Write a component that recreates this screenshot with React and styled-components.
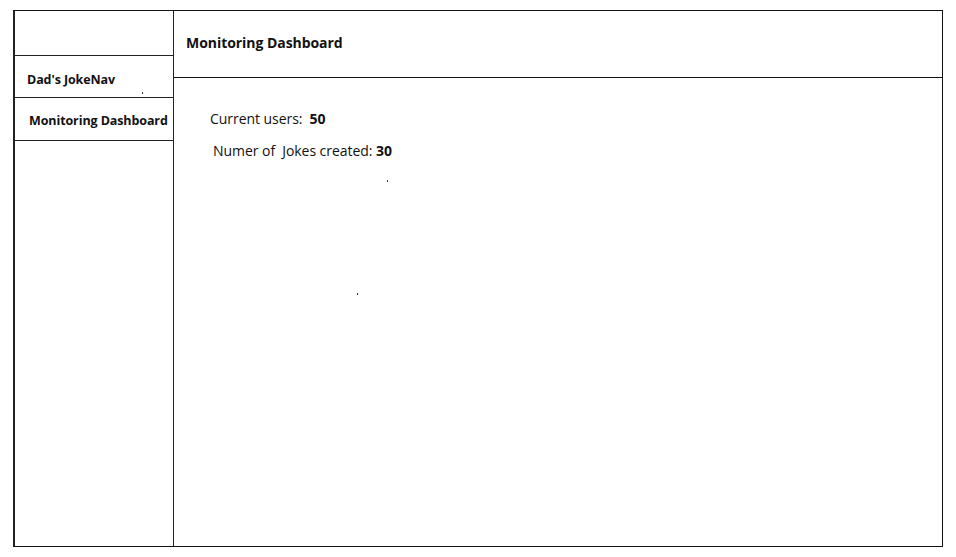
import React from "react";
import styled, { createGlobalStyle } from "styled-components";

const Global = createGlobalStyle`
  html, body { margin: 0; padding: 0; background: #fff; }
  body { font-family: "Open Sans", "Liberation Sans", sans-serif; color: #111; }
`;

const Page = styled.div`
  width: 956px;
  height: 557px;
  padding: 10px 0 0 13px;
  box-sizing: border-box;
`;

const Frame = styled.div`
  position: relative;
  width: 930px;
  height: 537px;
  box-sizing: border-box;
  border: 1px solid #111;
  border-left: 2px solid #222;
  display: grid;
  grid-template-columns: 159px 1fr;
`;

const Sidebar = styled.nav`
  border-right: 1px solid #222;
  display: flex;
  flex-direction: column;
`;

const NavCell = styled.div`
  height: ${(p) => p.$h}px;
  border-bottom: 1px solid #222;
  display: flex;
  align-items: center;
  padding-left: ${(p) => p.$pl}px;
  padding-top: ${(p) => p.$pt || 0}px;
  box-sizing: border-box;
  font-weight: 700;
  font-size: 12.5px;
  letter-spacing: -0.1px;
  color: #111;
`;

const Main = styled.main`
  position: relative;
  display: flex;
  flex-direction: column;
`;

const Header = styled.header`
  height: 67px;
  box-sizing: border-box;
  border-bottom: 1px solid #111;
  display: flex;
  align-items: center;
  padding: 0 0 4px 12px;
  font-weight: 700;
  font-size: 14px;
  letter-spacing: -0.05px;
`;

const Stats = styled.div`
  padding: 31px 0 0 36px;
  display: flex;
  flex-direction: column;
  gap: 13px;
  font-size: 14px;
  letter-spacing: -0.05px;
`;

const Stat = styled.div`
  padding-left: ${(p) => p.$indent || 0}px;
  line-height: 19px;
  white-space: pre;
`;

const Value = styled.b`
  font-weight: 700;
`;

const Speck = styled.span`
  position: absolute;
  width: 1px;
  height: 2px;
  background: #333;
  left: ${(p) => p.$x}px;
  top: ${(p) => p.$y}px;
`;

export default function App() {
  return (
    <>
      <Global />
      <Page>
        <Frame>
          <Sidebar>
            <NavCell $h={45} $pl={11} />
            <NavCell $h={42} $pl={12} $pt={6}>Dad's JokeNav</NavCell>
            <NavCell $h={43} $pl={14} $pt={2}>Monitoring Dashboard</NavCell>
          </Sidebar>
          <Main>
            <Header>Monitoring Dashboard</Header>
            <Stats>
              <Stat>
                Current users:  <Value>50</Value>
              </Stat>
              <Stat $indent={3}>
                Numer of  Jokes created: <Value>30</Value>
              </Stat>
            </Stats>
            <Speck $x={213} $y={169} />
            <Speck $x={183} $y={282} />
          </Main>
          <Speck $x={127} $y={81} />
        </Frame>
      </Page>
    </>
  );
}
